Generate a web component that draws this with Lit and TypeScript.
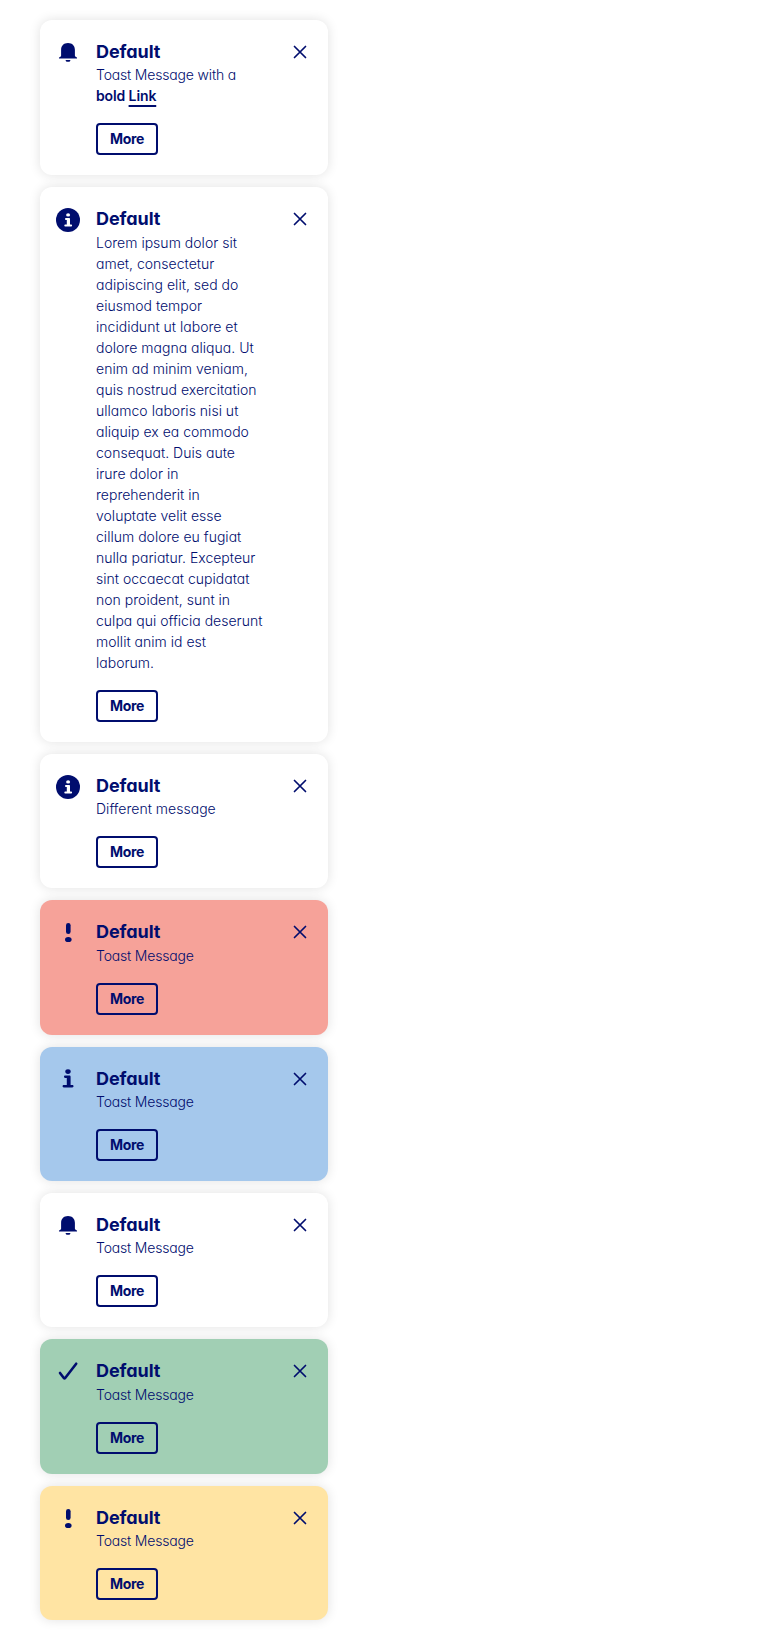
import { LitElement, html, css, svg, nothing } from "lit";
import { customElement, property } from "lit/decorators.js";

const icons: Record<string, unknown> = {
  bell: svg`<path d="M12 1.900c-4.300 0-6.900 2.900-6.900 6.800v5.900c0 .9-.5 1.300-1.500 1.600-.5.200-.7.400-.7.800 0 .4.200.5.600.5h17c.4 0 .6-.1.6-.5 0-.4-.2-.6-.7-.8-1-.3-1.500-.7-1.500-1.600V8.700c0-3.900-2.600-6.800-6.900-6.800z"/><path d="M9.600 18.900h4.800c0 1.300-.8 1.900-2.400 1.900s-2.400-.6-2.400-1.900z"/>`,
  circle: svg`<circle cx="12" cy="12" r="12"/><g fill="#fff"><ellipse cx="12.100" cy="6.900" rx="2" ry="1.700"/><path d="M9.900 10.100h3.100c.7 0 1 .4 1 1v5.500h1.200c.6 0 .9.4.9.9s-.3.900-.9.900H9.200c-.6 0-.9-.4-.9-.9s.3-.9.900-.9h1.600v-4.700h-.9c-.6 0-.9-.4-.9-.9s.3-.9.900-.9z"/></g>`,
  info: svg`<ellipse cx="12" cy="4.600" rx="2.700" ry="2.300"/><path d="M9.200 8.600h4.100c.9 0 1.300.5 1.300 1.300v8.200h1.700c.8 0 1.200.5 1.200 1.200s-.4 1.200-1.200 1.200H7.800c-.8 0-1.200-.5-1.200-1.200s.4-1.200 1.200-1.200h3v-7.100H9.200c-.8 0-1.200-.5-1.200-1.200s.4-1.200 1.200-1.200z"/>`,
  alert: svg`<rect x="10" y="2" width="4.600" height="11" rx="2.300"/><ellipse cx="12.300" cy="18.500" rx="3.300" ry="2.600"/>`,
  check: svg`<path d="M4 13 8 18.200Q8.500 18.800 9 18.200L20.200 3.700" fill="none" stroke="currentColor" stroke-width="2.600" stroke-linecap="round"/>`,
};

@customElement("toast-card")
class ToastCard extends LitElement {
  @property() icon = "bell";
  @property() tone = "plain";
  @property({ type: Boolean }) tight = false;
  @property({ attribute: false }) lines: unknown[] = [];

  static styles = css`
    :host { display: block; }
    .card {
      display: flex;
      align-items: flex-start;
      padding: 20px 16px;
      border-radius: 12px;
      background: #fff;
      box-shadow: 0 0 12px rgba(0, 0, 20, 0.12);
      color: #000d6e;
    }
    .error { background: #f6a299; }
    .info { background: #a5c8ec; }
    .success { background: #a1cfb4; }
    .warning { background: #ffe4a3; }
    .icon { width: 24px; height: 24px; margin-top: 0.7px; flex: none; fill: currentColor; display: block; }
    .body { flex: 1; margin: -1px 0 0 16px; min-width: 0; }
    .title { font-size: 18px; line-height: 25.4px; font-weight: 700; letter-spacing: -0.08px; }
    .text { font-size: 14px; line-height: 21px; font-weight: 300; letter-spacing: 0.02px; white-space: nowrap; }
    .tight { letter-spacing: -0.17px; }
    .button {
      display: block;
      box-sizing: border-box;
      width: 62px;
      height: 32px;
      margin-top: 17px;
      padding: 0;
      border: 2px solid currentColor;
      border-radius: 4px;
      background: none;
      color: inherit;
      font: 700 14px/28px Inter, sans-serif;
      font-feature-settings: "cv11";
      letter-spacing: -0.35px;
    }
    .close { padding: 0; border: 0; background: none; color: inherit; display: block; }
    .close svg { display: block; }
  `;

  render() {
    return html`<section class="card ${this.tone}">
      <svg class="icon" viewBox="0 0 24 24">${icons[this.icon] ?? nothing}</svg>
      <div class="body">
        <div class="title">Default</div>
        <div class="text ${this.tight ? "tight" : ""}">${this.lines.map((l) => html`<div>${l}</div>`)}</div>
        <button class="button">More</button>
      </div>
      <button class="close" aria-label="Close">
        <svg width="24" height="24" viewBox="0 0 24 24">
          <path d="M6.500 6.500l11 11M17.500 6.500l-11 11" fill="none" stroke="currentColor" stroke-width="1.700" stroke-linecap="round" />
        </svg>
      </button>
    </section>`;
  }
}

const lorem = [
  "Lorem ipsum dolor sit", "amet, consectetur", "adipiscing elit, sed do", "eiusmod tempor",
  "incididunt ut labore et", "dolore magna aliqua. Ut", "enim ad minim veniam,", "quis nostrud exercitation",
  "ullamco laboris nisi ut", "aliquip ex ea commodo", "consequat. Duis aute", "irure dolor in",
  "reprehenderit in", "voluptate velit esse", "cillum dolore eu fugiat", "nulla pariatur. Excepteur",
  "sint occaecat cupidatat", "non proident, sunt in", "culpa qui officia deserunt", "mollit anim id est", "laborum.",
];

@customElement("toast-link")
class ToastLink extends LitElement {
  static styles = css`
    .strong { font-weight: 600; letter-spacing: -0.12px; }
    .link { color: inherit; text-decoration: underline; text-decoration-thickness: 2px; text-underline-offset: 4px; text-decoration-skip-ink: none; }
  `;
  render() {
    return html`<span class="strong">bold <a class="link">Link</a></span>`;
  }
}

@customElement("app-root")
class AppRoot extends LitElement {
  static styles = css`
    :host {
      display: block;
      box-sizing: border-box;
      min-height: 1640px;
      padding: 20px 40px;
      background: #fff;
      font-family: Inter, sans-serif;
      font-feature-settings: "cv11";
    }
    .stack { display: flex; flex-direction: column; gap: 12px; width: 288px; }
  `;

  render() {
    const toasts: [string, string, boolean, unknown[]][] = [
      ["bell", "plain", true, ["Toast Message with a", html`<toast-link></toast-link>`]],
      ["circle", "plain", false, lorem],
      ["circle", "plain", false, ["Different message"]],
      ["alert", "error", true, ["Toast Message"]],
      ["info", "info", true, ["Toast Message"]],
      ["bell", "plain", true, ["Toast Message"]],
      ["check", "success", true, ["Toast Message"]],
      ["alert", "warning", true, ["Toast Message"]],
    ];
    return html`<main class="stack">
      ${toasts.map(([icon, tone, tight, lines]) => html`<toast-card .icon=${icon} .tone=${tone} .tight=${tight} .lines=${lines}></toast-card>`)}
    </main>`;
  }
}
